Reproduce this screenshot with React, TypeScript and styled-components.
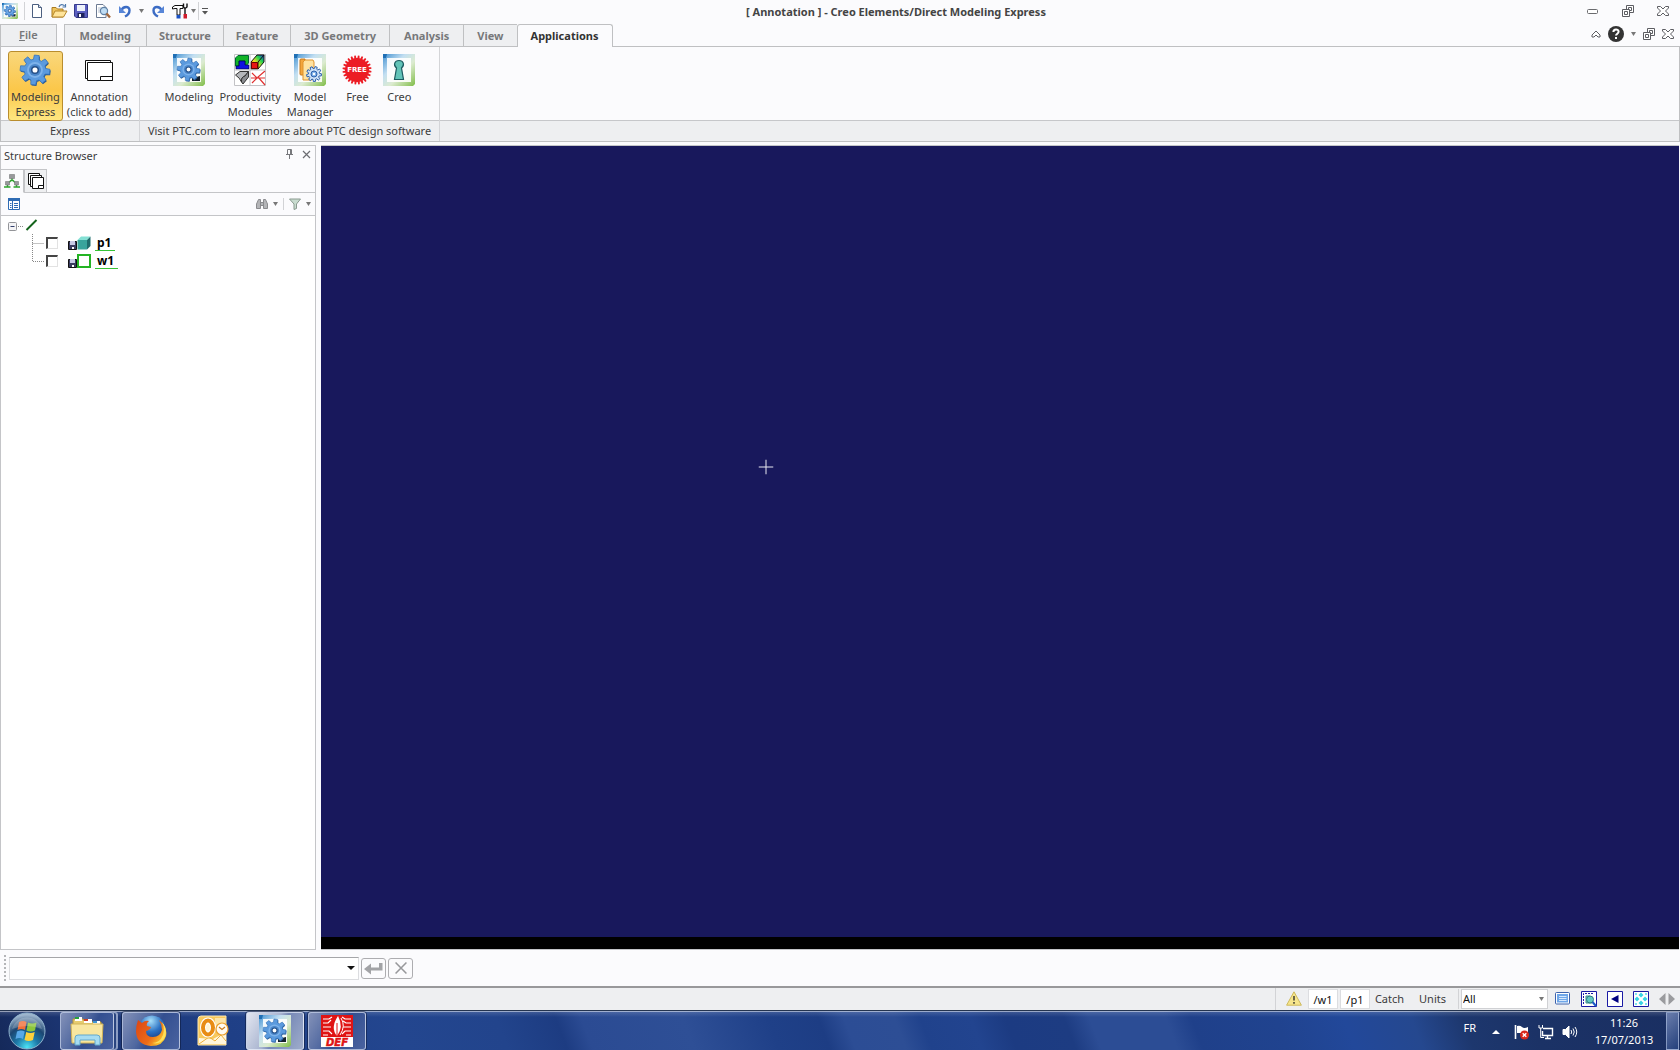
import React from "react";
import styled, { createGlobalStyle } from "styled-components";

const Global = createGlobalStyle`
  *, *::before, *::after { box-sizing: border-box; }
  html, body { margin: 0; padding: 0; }
  body { font-family: "Noto Sans", "Open Sans", sans-serif; font-size: 11px; line-height: 15px; color: #3c3c3c; background: #fbfbfd; }
  button, input, select { font: inherit; color: inherit; margin: 0; padding: 0; }
  button { background: none; border: 0; cursor: default; }
  svg { display: block; flex: none; }
  ul { list-style: none; margin: 0; padding: 0; }
`;

const Window = styled.div`
  display: flex;
  flex-direction: column;
  min-height: 100vh;
  overflow: hidden;
`;

/* ---------- title bar ---------- */
const TitleBar = styled.header`
  display: grid;
  grid-template-columns: 1fr auto 1fr;
  align-items: center;
  height: 24px;
  padding-bottom: 2px;
`;
const QuickAccess = styled.div`
  display: flex;
  align-items: center;
  height: 22px;
  padding-left: 2px;
`;
const QuickButton = styled.button<{ $w?: number }>`
  width: ${(p) => p.$w ?? 22}px;
  height: 22px;
  display: flex;
  align-items: center;
  justify-content: center;
`;
const Rule = styled.span<{ $h?: number; $gap?: number; $after?: number }>`
  width: 1px;
  height: ${(p) => p.$h ?? 18}px;
  margin: 0 ${(p) => p.$after ?? p.$gap ?? 0}px 0 ${(p) => p.$gap ?? 0}px;
  background: #d2d3d6;
`;
const Title = styled.h1`
  margin: 0;
  padding-left: 112px;
  font-size: 11px;
  font-weight: 700;
  color: #444;
`;
const Controls = styled.div<{ $gap: number; $pad: number }>`
  display: flex;
  align-items: center;
  justify-content: flex-end;
  gap: ${(p) => p.$gap}px;
  padding-right: ${(p) => p.$pad}px;
  margin-left: auto;
`;
const IconButton = styled.button`
  display: flex;
  align-items: center;
  justify-content: center;
`;

/* ---------- ribbon ---------- */
const TabRow = styled.nav`
  display: flex;
  height: 23px;
  box-shadow: inset 0 -1px 0 #bfc0c2;
`;
const TabControls = styled(Controls)`
  padding-bottom: 4px;
`;
const Tab = styled.button<{ $active?: boolean; $file?: boolean; $pad: number }>`
  height: 23px;
  padding: 0 ${(p) => p.$pad}px;
  padding-bottom: ${(p) => (p.$file ? 3 : p.$active ? 2 : 0)}px;
  margin-right: ${(p) => (p.$file ? 7 : 0)}px;
  font-weight: ${(p) => (p.$file ? 600 : 700)};
  color: ${(p) => (p.$active ? "#333" : "#77787a")};
  background: ${(p) => (p.$active ? "#fbfbfd" : "#eeeff1")};
  border: solid #bfc0c2;
  border-width: 1px ${(p) => (p.$active || p.$file ? 1 : 0)}px ${(p) => (p.$active ? 0 : 1)}px 1px;
  border-radius: ${(p) => (p.$active ? "3px 3px 0 0" : "0")};
`;
const Ribbon = styled.section`
  display: flex;
  height: 95px;
  border: solid #bfc0c2;
  border-width: 0 1px 1px 1px;
`;
const Group = styled.div<{ $grow?: boolean }>`
  display: flex;
  flex-direction: column;
  flex: ${(p) => (p.$grow ? "1" : "none")};
  border-right: ${(p) => (p.$grow ? "0" : "1px solid #d4d5d8")};
`;
const GroupItems = styled.div<{ $left: number; $right: number; $gap: number }>`
  display: flex;
  gap: ${(p) => p.$gap}px;
  height: 74px;
  padding: 4px ${(p) => p.$right}px 0 ${(p) => p.$left}px;
  border-bottom: 1px solid #c6c7ca;
`;
const GroupName = styled.div`
  flex: 1;
  padding: 2px 4px 0;
  text-align: center;
  white-space: nowrap;
  background: #eeeff1;
`;
const Tool = styled.button<{ $active?: boolean }>`
  display: flex;
  flex-direction: column;
  align-items: center;
  min-width: 42px;
  height: 70px;
  padding: 2px 2px 0;
  border: 1px solid ${(p) => (p.$active ? "#b98d2e" : "transparent")};
  border-radius: 3px;
  background: ${(p) => (p.$active ? "linear-gradient(#f9d77c, #fbc74a 55%, #fee680)" : "none")};
  white-space: pre-line;
`;
const ToolIcon = styled.span`
  display: flex;
  height: 34px;
  margin-bottom: 1px;
`;

/* ---------- workspace ---------- */
const Workspace = styled.div`
  flex: 1;
  display: flex;
  gap: 5px;
  padding-top: 3px;
`;
const Panel = styled.aside`
  display: flex;
  flex-direction: column;
  width: 316px;
  border: 1px solid #c4c5c8;
`;
const PanelHead = styled.div`
  display: flex;
  align-items: center;
  justify-content: space-between;
  height: 23px;
  padding: 0 4px 7px 3px;
`;
const PanelTitle = styled.h2`
  margin: 0;
  padding-top: 3px;
  font-size: 11px;
  font-weight: 400;
`;
const PanelTabs = styled.div`
  display: flex;
  height: 24px;
  box-shadow: inset 0 -1px 0 #c4c5c8;
`;
const PanelTab = styled.button<{ $active?: boolean }>`
  display: flex;
  align-items: center;
  justify-content: center;
  width: 23px;
  height: 24px;
  border: 1px solid #c4c5c8;
  border-left-width: ${(p) => (p.$active ? 0 : 1)}px;
  border-bottom-color: ${(p) => (p.$active ? "#fbfbfd" : "#c4c5c8")};
  background: ${(p) => (p.$active ? "#fbfbfd" : "#eeeff1")};
`;
const PanelTools = styled.div`
  display: flex;
  align-items: center;
  height: 23px;
  padding: 0 4px 0 7px;
  border-bottom: 1px solid #c4c5c8;
`;
const Tree = styled.ul`
  flex: 1;
  padding: 2px 7px;
  background: #fff;
`;
const TreeRoot = styled.div`
  display: flex;
  align-items: center;
  height: 16px;
`;
const Branch = styled.ul`
  padding-left: 24px;
`;
const Leaf = styled.li`
  display: flex;
  align-items: center;
  height: 18px;
`;
const LeafLabel = styled.label`
  display: flex;
  align-items: center;
  color: #000;
  font-size: 12px;
  font-weight: 700;
`;
const LeafName = styled.span`
  margin-left: 4px;
  padding: 0 4px 0 2px;
  height: 15px;
  line-height: 13px;
  border-bottom: 1px solid #35c435;
`;
const Check = styled.input`
  appearance: none;
  width: 12px;
  height: 12px;
  margin: 0 10px 0 2px;
  border: solid;
  border-width: 2px 1px 1px 2px;
  border-color: #444 #e2e2e2 #e2e2e2 #444;
  background: #fff;
`;
const Viewport = styled.main`
  position: relative;
  flex: 1;
  margin-right: 1px;
  border: solid #c4c5c8;
  border-width: 1px 0;
  background: linear-gradient(to top, #000 12px, #18185c 12px);
`;
const Cursor = styled.svg`
  position: absolute;
  left: 32.8%;
  top: 40%;
  transform: translate(-50%, -50%);
`;

/* ---------- command line and status ---------- */
const CommandLine = styled.form`
  display: flex;
  align-items: center;
  gap: 2px;
  height: 36px;
  padding-left: 4px;
`;
const Grip = styled.span`
  width: 2px;
  height: 26px;
  margin-right: 1px;
  background: repeating-linear-gradient(#b4b5b8 0 2px, transparent 2px 4px);
`;
const Combo = styled.div`
  display: flex;
  align-items: center;
  width: 350px;
  height: 23px;
  padding-right: 3px;
  background: #fff;
  border: 1px solid #dcdde0;
  border-top-color: #a5a6a9;
`;
const ComboInput = styled.input`
  flex: 1;
  min-width: 0;
  border: 0;
  outline: 0;
  background: transparent;
`;
const CommandButton = styled.button`
  display: flex;
  align-items: center;
  justify-content: center;
  width: 25px;
  height: 21px;
  border: 1px solid #adadb0;
  border-radius: 3px;
`;
const StatusBar = styled.footer`
  display: flex;
  align-items: center;
  justify-content: flex-end;
  height: 24px;
  padding: 0 5px 1px 0;
  border-top: 2px solid #98989a;
  background: #eeeff1;
`;
const Path = styled.button`
  width: 30px;
  height: 20px;
  margin-right: 2px;
  padding-top: 1px;
  border: 1px solid #dcdde0;
  background: #fff;
  color: #111;
`;
const StatusText = styled.button`
  margin: 0 12px 0 3px;
`;
const FilterBox = styled.span`
  display: flex;
  align-items: center;
  width: 87px;
  height: 20px;
  margin: 0 7px 0 2px;
  padding-right: 3px;
  border: 1px solid #d0d1d4;
  background: #fff;
`;
const Filter = styled.select`
  flex: 1;
  appearance: none;
  padding-left: 1px;
  border: 0;
  outline: 0;
  background: transparent;
  color: #111;
`;
const StatusIcons = styled.div`
  display: flex;
  align-items: center;
  gap: 10px;
`;

/* ---------- taskbar ---------- */
const Taskbar = styled.nav`
  display: flex;
  align-items: center;
  height: 40px;
  border-top: 1px solid #24344f;
  color: #fff;
  background:
    linear-gradient(rgba(255, 255, 255, 0.55) 0 1px, rgba(255, 255, 255, 0.14) 1px, transparent 6px),
    linear-gradient(69deg, #15295a 0%, #1b3470 4%, #1f3f86 14%, #23468f 24%, #22448c 30%, #1d3c82 33.5%, #2b4b93 35%,
      #2e4f96 41%, #1f4088 46%, #1d3d84 49%, #2c4d95 50.5%, #2d4e95 53.5%, #20428c 55%, #22448f 58%, #1c3b82 60%,
      #1d3c82 63.5%, #2c4d95 65%, #2c4d95 69.5%, #1f408a 71%, #20438f 76%, #22489a 80%, #25488f 84%, #1d376e 87%, #1b3266 91%, #1a2f62 100%);
`;
const StartButton = styled.button`
  margin: 0 14px 0 8px;
`;
const TaskButton = styled.button<{ $state?: "open" | "active"; $stack?: boolean }>`
  display: flex;
  align-items: center;
  justify-content: center;
  width: ${(p) => (p.$stack ? 54 : 58)}px;
  height: 38px;
  margin-right: ${(p) => (p.$stack ? 8 : 4)}px;
  border: 1px solid ${(p) => (p.$state ? "rgba(225,232,248,.65)" : "transparent")};
  border-radius: 3px;
  box-shadow: ${(p) => (p.$stack ? "3px 0 0 -1px #2a4580, 4px 0 0 0 rgba(215,225,245,.6)" : p.$state ? "0 0 0 1px rgba(10,20,50,.5)" : "none")};
  background: ${(p) =>
    p.$state === "active"
      ? "linear-gradient(120deg, #e2e6f0, #a9b4d0 45%, #7789b6 55%, #9fadcc)"
      : p.$state === "open"
        ? "linear-gradient(120deg, #8391b8, #5068a0 40%, #334f90 55%, #4a63a0)"
        : "none"};
`;
const Tray = styled.div`
  display: flex;
  align-items: center;
  height: 100%;
  margin-left: auto;
`;
const Language = styled.button`
  margin: 0 16px 6px 0;
`;
const HiddenIcons = styled(IconButton)`
  margin-right: 6px;
`;
const TrayIcons = styled.div`
  display: flex;
  align-items: center;
  gap: 8px;
  padding-top: 2px;
`;
const Clock = styled.time`
  width: 88px;
  padding-left: 4px;
  text-align: center;
  line-height: 17px;
  white-space: pre-line;
`;
const ShowDesktop = styled.button`
  width: 13px;
  height: 38px;
  margin-right: 1px;
  border: 1px solid rgba(190, 205, 235, 0.6);
  background: linear-gradient(135deg, #6a7dac, #24407c);
`;

/* ---------- drawings ---------- */
const gearPath = (cx: number, cy: number, outer: number, inner: number, teeth = 8) => {
  const pts: string[] = [];
  for (let i = 0; i < teeth; i++) {
    const a = (i / teeth) * Math.PI * 2 + 0.12;
    const w = Math.PI / teeth;
    [[-0.68, inner], [-0.42, outer], [0.42, outer], [0.68, inner]].forEach(([k, r]) =>
      pts.push(`${(cx + Math.cos(a + k * w) * r).toFixed(2)} ${(cy + Math.sin(a + k * w) * r).toFixed(2)}`)
    );
  }
  return `M${pts.join("L")}Z`;
};

const Gear = ({ cx = 16, cy = 16, r = 15 }: { cx?: number; cy?: number; r?: number }) => (
  <g>
    <path d={gearPath(cx + r * 0.05, cy + r * 0.07, r, r * 0.72)} fill="#2a5a94" />
    <path d={gearPath(cx, cy, r, r * 0.72)} fill="#5b9ade" stroke="#3672b4" strokeWidth={r * 0.05} />
    <circle cx={cx} cy={cy} r={r * 0.53} fill="#7db2ea" />
    <circle cx={cx} cy={cy} r={r * 0.4} fill="#4a86ca" />
    <circle cx={cx} cy={cy} r={r * 0.22} fill="#fff" stroke="#244f88" strokeWidth={r * 0.1} />
  </g>
);

const Frame = ({ id }: { id: string }) => (
  <g>
    <defs>
      <linearGradient id={id} x1="0" y1="0" x2="1" y2="1">
        <stop offset="0" stopColor="#3f8fd0" />
        <stop offset=".35" stopColor="#c3dff2" />
        <stop offset=".6" stopColor="#dcebd0" />
        <stop offset="1" stopColor="#80bd48" />
      </linearGradient>
    </defs>
    <path d="M0 0H32V30L30 32H0Z" fill={`url(#${id})`} />
    <path d="M4 4H28V28H4Z" fill="#fff" opacity=".9" />
    <path d="M0 0H4L3 4H0Z" fill="#1f6fb5" />
  </g>
);

const GearTile = ({ size, id }: { size: number; id: string }) => (
  <svg width={size} height={size} viewBox="0 0 32 32">
    <Frame id={id} />
    <path d="M19 24l8-2v5h-8z" fill="#14202c" />
    <Gear cx={15.5} cy={15.5} r={11.5} />
  </svg>
);

const Down = ({ w = 6, fill = "#777" }: { w?: number; fill?: string }) => (
  <svg width={w} height="4" viewBox="0 0 6 4" preserveAspectRatio="none"><path d="M0 0H6L3 4Z" fill={fill} /></svg>
);

const NewIcon = () => (
  <svg width="16" height="16" viewBox="0 0 16 16">
    <path d="M3.500 1.500H9.500L12.500 4.500V14.500H3.500Z" fill="#fff" stroke="#4c5f80" />
    <path d="M9.500 1.500V4.500H12.500" fill="#d5deec" stroke="#4c5f80" />
  </svg>
);
const OpenIcon = () => (
  <svg width="17" height="16" viewBox="0 0 17 16">
    <path d="M1 14V4.500H5L6.500 6H12V14Z" fill="#efc45c" stroke="#a97b20" />
    <path d="M1 14L4 8H16L12.500 14Z" fill="#ffe49a" stroke="#b5862a" />
    <path d="M8 4C9 1 12 1 13.500 3M14.500 1V4H11.500" fill="none" stroke="#4f79ad" strokeWidth="1.200" />
  </svg>
);
const SaveIcon = () => (
  <svg width="16" height="16" viewBox="0 0 16 16">
    <path d="M1.500 1.500H14.500V14.500H3L1.500 13Z" fill="#5b5fc0" stroke="#353a8c" />
    <path d="M4 2H12V8H4Z" fill="#edf1fa" />
    <path d="M4.500 10H11.500V14.500H4.500Z" fill="#20245c" />
    <path d="M6 11H8V14H6Z" fill="#fff" />
  </svg>
);
const PreviewIcon = () => (
  <svg width="16" height="16" viewBox="0 0 16 16">
    <path d="M1.500 1.500H8L11 4.500V14.500H1.500Z" fill="#fff" stroke="#6c7a92" />
    <path d="M3 5H7M3 7H6M3 9H5" stroke="#b6c0d0" />
    <circle cx="9" cy="8" r="3.600" fill="#bfdcf3" stroke="#5f7fa3" strokeWidth="1.200" />
    <path d="M11.500 10.500L15 14.500" stroke="#a3683c" strokeWidth="2.400" />
  </svg>
);
const UndoIcon = ({ flip }: { flip?: boolean }) => (
  <svg width="14" height="14" viewBox="0 0 14 14">
    <g transform={flip ? "matrix(-1 0 0 1 14 0)" : undefined}>
      <path d="M3.500 6C5 2.500 11.500 1.500 11.500 6.200C11.500 9 10 11 7 12.500" fill="none" stroke="#3c6cc4" strokeWidth="2.400" />
      <path d="M1 2V9H8Z" fill="#5886d8" />
    </g>
  </svg>
);
const ToolsIcon = () => (
  <svg width="16" height="16" viewBox="0 0 16 16">
    <path d="M.5 6V4L3 2.500H11V5.500H8V12H5V5.500H3Z" fill="#fff" stroke="#111" />
    <path d="M4.500 12H8.500V15.500H4.500Z" fill="#1a52c4" />
    <path d="M11.500 .5V4L13 5.500V11M15 .5V4L13 5.500" fill="none" stroke="#111" strokeWidth="1.400" />
    <path d="M11.500 11H15V15.500H11.500Z" fill="#d01c2c" />
  </svg>
);
const MinIcon = () => (
  <svg width="12" height="12" viewBox="0 0 12 12"><rect x=".5" y="4.500" width="10" height="4" rx="1" fill="#fff" stroke="#6a6b6e" /></svg>
);
const RestoreIcon = () => (
  <svg width="12" height="12" viewBox="0 0 12 12" fill="#fff" stroke="#5c5d62">
    <path d="M4.500 .5H11.500V7.500H4.500Z" /><path d="M6.500 2.500H9.500V5.500H6.500Z" />
    <path d="M.5 4.500H7.500V11.500H.5Z" /><path d="M2.500 6.500H5.500V9.500H2.500Z" />
  </svg>
);
const CloseIcon = () => (
  <svg width="12" height="10" viewBox="0 0 12 10">
    <path d="M.5 .5H3.500L6 3L8.500 .5H11.500V2L8.500 5L11.500 8V9.500H8.500L6 7L3.500 9.500H.5V8L3.500 5L.5 2Z" fill="#fff" stroke="#5c5d62" />
  </svg>
);
const CollapseIcon = () => (
  <svg width="10" height="8" viewBox="0 0 10 8"><path d="M5 1L9 5V7H7L5 5L3 7H1V5Z" fill="#fff" stroke="#5c5d62" /></svg>
);
const HelpIcon = () => (
  <svg width="16" height="16" viewBox="0 0 16 16">
    <circle cx="8" cy="8" r="8" fill="#333" />
    <path d="M5.400 6C5.400 2.600 10.600 2.600 10.600 5.800C10.600 7.600 8 7.800 8 9.600" fill="none" stroke="#fff" strokeWidth="2" />
    <path d="M7 11H9V13H7Z" fill="#fff" />
  </svg>
);

const AnnotationIcon = () => (
  <svg width="32" height="32" viewBox="0 0 32 32" fill="#fff" stroke="#111">
    <path d="M2.500 6.500H27.500V24.500H2.500Z" /><path d="M4.500 8.500H29.500V26.500H4.500Z" /><path d="M17.500 22.500H29.500V26.500H17.500Z" />
  </svg>
);
const ProductivityIcon = () => (
  <svg width="32" height="32" viewBox="0 0 32 32">
    <defs>
      <linearGradient id="heat" x1="1" y1="0" x2="0" y2="1">
        <stop offset="0" stopColor="#2433e0" /><stop offset=".3" stopColor="#20d050" /><stop offset=".6" stopColor="#f0e020" /><stop offset="1" stopColor="#e01010" />
      </linearGradient>
    </defs>
    <path d="M.5 .5H31.500V31.500H.5Z" fill="#fff" stroke="#c2c2c6" />
    <path d="M1.500 4L4 1.500H14.500V9L11 13V7H5V12H1.500Z" fill="#12b428" stroke="#063" />
    <path d="M5 7H11V11H15V15H2V12H5Z" fill="#1010e0" stroke="#004" strokeWidth=".7" />
    <path d="M17 8L23 1H30V8L24 15H17Z" fill="url(#heat)" stroke="#111" />
    <path d="M24 8V15M24 8L30 1" fill="none" stroke="#111" />
    <path d="M17.500 8.500H23.500V14.500H17.500Z" fill="#e81414" stroke="#600" />
    <path d="M1.500 21L6 17.500H14.500L11 22Q7 23 7.500 28Q6 24 1.500 21Z" fill="#b4b6ba" stroke="#333" />
    <path d="M11 22L14.500 17.500V23L9 30L7.500 28Q7 23 11 22Z" fill="#8a8c90" stroke="#333" />
    <path d="M31 17L24 23L31 31M17 24H31M18 19L23 24M18 29L23 24" fill="none" stroke="#e03030" strokeWidth="1.200" />
    <path d="M16 1V31M1 16H31" stroke="#c2c2c6" />
  </svg>
);
const ManagerIcon = () => (
  <svg width="32" height="32" viewBox="0 0 32 32">
    <Frame id="fm" />
    <path d="M6 6Q6 5 7 5H11V21H7Q6 21 6 20Z" fill="#f4a63c" stroke="#c5781c" />
    <path d="M9 8L11 6H19L20 8V24L18 26H9Z" fill="#ffe2a0" stroke="#e0932c" />
    <path d={gearPath(20, 20, 7.5, 5.5, 9)} fill="#cfe2f8" stroke="#2c60ac" />
    <circle cx="20" cy="20" r="3" fill="#7fb2ea" stroke="#2c60ac" /><circle cx="20" cy="20" r="1.200" fill="#fff" />
  </svg>
);
const FreeIcon = () => (
  <svg width="30" height="32" viewBox="0 0 30 32">
    <path d={gearPath(15, 16, 14.5, 12, 24)} fill="#ec1c24" />
    <text x="15" y="18" textAnchor="middle" fontSize="7" fontWeight="700" fill="#fff" fontFamily="DejaVu Sans, sans-serif">FREE</text>
  </svg>
);
const CreoIcon = () => (
  <svg width="32" height="32" viewBox="0 0 32 32">
    <Frame id="fc" />
    <path d="M13.500 14C10 11 11.500 6.500 16 6.500S22 11 18.500 14L20.500 25.500H11.500Z" fill="#62c4b8" stroke="#1c5c60" strokeWidth="1.200" />
  </svg>
);

const PinIcon = () => (
  <svg width="9" height="10" viewBox="0 0 9 10"><path d="M2.500 5.500V.5H6.500V5.500M1 5.500H8M4.500 6V10M5.500 1V5" fill="none" stroke="#77787c" /></svg>
);
const ThinX = ({ size = 9, color = "#6c6d72", sw = 1.2 }: { size?: number; color?: string; sw?: number }) => (
  <svg width={size} height={size} viewBox="0 0 9 9"><path d="M1 1L8 8M8 1L1 8" stroke={color} strokeWidth={sw} /></svg>
);
const HierarchyIcon = () => (
  <svg width="16" height="16" viewBox="0 0 16 16">
    <path d="M8 5V8M3.500 11L7 7.500H9L12.500 11M0 14H6.500M9.500 14H16M3.500 12V14M12.500 12V14" fill="none" stroke="#2ca42c" strokeWidth="1.400" />
    <path d="M5.500 1.500H10.500V5.500H5.500Z M1.500 8.500H5.500V12H1.500Z M10.500 8.500H14.500V12H10.500Z" fill="#98999c" stroke="#77787a" strokeWidth=".6" />
  </svg>
);
const SheetsIcon = () => (
  <svg width="16" height="16" viewBox="0 0 16 16" fill="#fff" stroke="#111">
    <path d="M.5 .5H11.500V11.500H.5Z" /><path d="M2.500 2.500H13.500V13.500H2.500Z" /><path d="M4.500 4.500H15.500V15.500H4.500Z" /><path d="M10.500 15.500V12.500H15.500" />
  </svg>
);
const ColumnsIcon = () => (
  <svg width="12" height="12" viewBox="0 0 12 12">
    <path d="M.5 .5H11.500V11.500H.5Z" fill="#fff" stroke="#2f6cb4" /><path d="M0 0H12V3H0Z" fill="#2f6cb4" />
    <path d="M4.500 3V11M2 5.500H3.500M2 7.500H3.500M2 9.500H3.500M6 5.500H10M6 7.500H10M6 9.500H10" stroke="#2f6cb4" />
  </svg>
);
const BinocularsIcon = () => (
  <svg width="12" height="10" viewBox="0 0 12 10" fill="#b4b5b8" stroke="#8a8b8e">
    <path d="M2.500 .5H4.500V9.500H.5V5Z M9.500 .5H7.500V9.500H11.500V5Z M4.500 3.500H7.500V6.500H4.500Z" />
  </svg>
);
const FunnelIcon = () => (
  <svg width="12" height="12" viewBox="0 0 12 12"><path d="M.5 1H11.500L7.500 6V10.500L5 11.500V6Z" fill="#c8dccf" stroke="#8a9a90" /></svg>
);
const Expander = () => (
  <svg width="30" height="16" viewBox="0 0 30 16">
    <rect x=".5" y="4.500" width="8" height="8" rx="1" fill="#f4f4f6" stroke="#939498" /><path d="M2.500 8.500H6.500" stroke="#33406c" />
    <path d="M10 8.500H16" stroke="#888" strokeDasharray="1 1" />
    <path d="M18.500 12L28.500 2" stroke="#14641c" strokeWidth="2" />
  </svg>
);
const Elbow = ({ last }: { last?: boolean }) => (
  <svg width="12" height="18" viewBox="0 0 12 18"><path d={last ? "M.5 0V9.500H12" : "M.5 0V18M.5 9.500H12"} fill="none" stroke="#888" strokeDasharray="1 1" /></svg>
);
const DiskIcon = () => (
  <svg width="9" height="14" viewBox="0 0 9 14"><path d="M.5 5.500H8.500V13.500H.5Z" fill="#3a3c60" stroke="#111" /><path d="M2 5H7V9H2Z" fill="#c8cae6" /><path d="M4 11H6V13H4Z" fill="#fff" /></svg>
);
const PartIcon = () => (
  <svg width="14" height="14" viewBox="0 0 14 14">
    <path d="M.5 4L4 .5H13.500L10 4Z" fill="#84e0d4" /><path d="M.5 4H10V13.500H.5Z" fill="#38a49c" /><path d="M10 4L13.500 .5V10L10 13.500Z" fill="#1e6c6c" />
  </svg>
);
const PlaneIcon = () => (
  <svg width="14" height="14" viewBox="0 0 14 14"><path d="M1 1H13V13H1Z" fill="#fff" stroke="#24b424" strokeWidth="2" /></svg>
);

const WarningIcon = () => (
  <svg width="16" height="15" viewBox="0 0 16 15"><path d="M8 .8L15.400 14.200H.6Z" fill="#f6e58c" stroke="#cdb95c" strokeLinejoin="round" /><path d="M8 5V9.500M8 11V12.800" stroke="#5c5840" strokeWidth="1.800" /></svg>
);
const ListIcon = () => (
  <svg width="16" height="13" viewBox="0 0 16 13"><rect x=".5" y=".5" width="14" height="11.500" rx="1" fill="#fff" stroke="#3c62ac" /><path d="M2 2H13V10.500H2Z" fill="#6ea6e8" /><path d="M4 4.500H11.500M4 6.500H11.500M4 8.500H11.500" stroke="#d6e8fc" /></svg>
);
const Boxed = ({ children }: { children: React.ReactNode }) => (
  <svg width="16" height="16" viewBox="0 0 16 16"><path d="M.5 .5H15.500V15.500H.5Z" fill="#fff" stroke="#1a1aa4" />{children}</svg>
);
const EnterIcon = () => (
  <svg width="19" height="13" viewBox="0 0 19 13"><path d="M0 7L7 1.500V5.500H15V1H18.500V8.500H7V12.500Z" fill="#a2a3a6" /></svg>
);

const StartOrb = () => (
  <svg width="38" height="38" viewBox="0 0 38 38">
    <defs>
      <radialGradient id="orb" cx=".5" cy=".95" r=".9">
        <stop offset="0" stopColor="#4ce4f6" /><stop offset=".35" stopColor="#1d78a8" /><stop offset=".65" stopColor="#1c4672" /><stop offset="1" stopColor="#9fb6ce" />
      </radialGradient>
    </defs>
    <circle cx="19" cy="19" r="18" fill="url(#orb)" stroke="#8fb2cc" />
    <path d="M11 10Q15 8 18.500 10L17 18Q13.500 16 9.500 18Z" fill="#f0703a" />
    <path d="M20 10.500Q24 12.500 28.500 10.500L27 18.500Q22.500 20.500 18.500 18.500Z" fill="#8cc63c" />
    <path d="M9 19.500Q13 17.500 16.700 19.500L15 27Q11.500 25 7.500 27Z" fill="#58a8e8" />
    <path d="M18.200 20Q22.500 22 26.700 20L25 28Q20.500 30 16.500 28Z" fill="#fcd03c" />
    <path d="M4 17A15.500 15.500 0 0 1 34 17Q19 11 4 17Z" fill="#fff" opacity=".2" />
  </svg>
);
const FolderIcon = () => (
  <svg width="34" height="32" viewBox="0 0 34 32">
    <path d="M3 4H13L15 7H31V27H3Z" fill="#e6cb70" stroke="#b89838" />
    <path d="M5 2H12V6H5Z" fill="#fff" /><path d="M5 2H9V4H5Z" fill="#28a43c" />
    <path d="M14 4H22V8H14Z" fill="#fff" /><path d="M14 4H18V6H14Z" fill="#cc3c24" /><path d="M23 6H30V9H23Z" fill="#fff" /><path d="M23 6H27V8H23Z" fill="#3c94d4" />
    <path d="M1 9H33L32 28H2Z" fill="#f8e6a0" stroke="#d2b458" />
    <path d="M5 30V23Q5 20 8 20H27Q30 20 30 23V30H25V25H10V30Z" fill="#a6dcf2" stroke="#62a8cc" />
  </svg>
);
const FirefoxIcon = () => (
  <svg width="32" height="32" viewBox="0 0 32 32">
    <defs>
      <radialGradient id="globe" cx=".45" cy=".2" r=".8"><stop offset="0" stopColor="#a8e0fa" /><stop offset=".5" stopColor="#2c72c4" /><stop offset="1" stopColor="#122c70" /></radialGradient>
      <linearGradient id="fox" x1="0" y1="0" x2="1" y2=".6"><stop offset="0" stopColor="#dc4414" /><stop offset=".65" stopColor="#ec6c18" /><stop offset="1" stopColor="#fcc82c" /></linearGradient>
    </defs>
    <circle cx="17" cy="14" r="13.500" fill="url(#globe)" />
    <path d="M3 5L7 8Q10 5 14 6Q11 8 12 11L16 12Q15 15 11 16Q11 22 18 22Q25 22 27 15Q27 10 24 5Q33 12 31 21Q28 31 16 31Q2 30 1 17Q1 10 3 5Z" fill="url(#fox)" />
    <path d="M27 7Q30 13 28 20Q25 28 17 28Q26 30 30 22Q33 14 27 7Z" fill="#fce05c" />
  </svg>
);
const OutlookIcon = () => (
  <svg width="32" height="32" viewBox="0 0 32 32">
    <path d="M4 1H29V30H1V4Q1 1 4 1Z" fill="#f8c85c" stroke="#fce9b4" />
    <path d="M2 23L16 24L29 17V29H2Z" fill="#fff6dc" /><path d="M2 29L12 22L18 26L24 20L29 26" fill="none" stroke="#eeb03c" />
    <path d="M18 3H28V12H18Z" fill="#fce4a8" />
    <ellipse cx="11" cy="12.500" rx="5" ry="7" fill="#fff4d4" stroke="#fff" strokeWidth="6" />
    <ellipse cx="11" cy="12.500" rx="5" ry="7" fill="none" stroke="#e88c14" strokeWidth="4" />
    <circle cx="25" cy="14" r="6" fill="#fffaf0" stroke="#eaa030" strokeWidth="1.200" /><path d="M22 12L25 14.500L28 12" fill="none" stroke="#c87a1c" strokeWidth="1.200" />
  </svg>
);
const DefIcon = () => (
  <svg width="32" height="32" viewBox="0 0 32 32">
    <path d="M0 0H32V32H0Z" fill="#fff" /><path d="M0 0H32V22H0Z" fill="#e01414" />
    <path d="M2 4H8L11 2M2 8H7L10 5M2 12H10M2 16H8L11 19M2 20H7M21 2L24 4H30M22 6L25 8H30M22 12H30M21 19L24 16H30M25 20H30" fill="none" stroke="#fff" strokeWidth="1.200" />
    <path d="M16 21Q9 13 17 1Q23 12 16 21Z" fill="#fff" /><path d="M16 21V8" stroke="#e01414" /><path d="M20 3Q25 11 19 20" fill="none" stroke="#fff" />
    <text x="16" y="31" textAnchor="middle" fontSize="10" fontWeight="700" fontStyle="italic" fill="#e01414" stroke="#e01414" strokeWidth=".5" fontFamily="DejaVu Sans, sans-serif">DEF</text>
  </svg>
);
const FlagIcon = () => (
  <svg width="16" height="16" viewBox="0 0 16 16">
    <path d="M1.500 1V15" stroke="#fff" strokeWidth="1.600" /><path d="M3 2Q6 1 8 3T14 3V9H3Z" fill="#fff" />
    <circle cx="10.500" cy="11" r="4.500" fill="#d8281c" /><path d="M8.700 9.200L12.300 12.800M12.300 9.200L8.700 12.800" stroke="#fff" strokeWidth="1.400" />
  </svg>
);
const NetworkIcon = () => (
  <svg width="16" height="16" viewBox="0 0 16 16" fill="none" stroke="#fff"><path d="M5 4.500H14.500V11.500H4.500V7M7 14.500H13M9.500 12V14" strokeWidth="1.400" /><path d="M1 1V4H4.500V1M2.700 4V13.500H6" /></svg>
);
const SpeakerIcon = () => (
  <svg width="16" height="16" viewBox="0 0 16 16" fill="none" stroke="#fff"><path d="M1 5.500H3.500L7 2V14L3.500 10.500H1Z" fill="#fff" /><path d="M9 6Q10.500 8 9 10M11 4.500Q13.500 8 11 11.500M13 3Q16.500 8 13 13" /></svg>
);

/* ---------- screen ---------- */
const tabs: [string, number][] = [
  ["Modeling", 15], ["Structure", 12], ["Feature", 12], ["3D Geometry", 13], ["Analysis", 14], ["View", 13], ["Applications", 13],
];
const learnTools: [string, React.ReactNode][] = [
  ["Modeling", <GearTile key="m" size={32} id="fr" />],
  ["Productivity\nModules", <ProductivityIcon key="p" />],
  ["Model\nManager", <ManagerIcon key="g" />],
  ["Free", <FreeIcon key="f" />],
  ["Creo", <CreoIcon key="c" />],
];

export default function App() {
  return (
    <Window>
      <Global />
      <TitleBar>
        <QuickAccess>
          <GearTile size={16} id="fa" />
          <Rule $gap={6} $after={1} />
          <QuickButton aria-label="New"><NewIcon /></QuickButton>
          <QuickButton aria-label="Open"><OpenIcon /></QuickButton>
          <QuickButton aria-label="Save"><SaveIcon /></QuickButton>
          <QuickButton aria-label="Preview"><PreviewIcon /></QuickButton>
          <QuickButton aria-label="Undo"><UndoIcon /></QuickButton>
          <QuickButton $w={11} aria-label="Undo list"><Down w={5} /></QuickButton>
          <QuickButton aria-label="Redo"><UndoIcon flip /></QuickButton>
          <QuickButton aria-label="Tools"><ToolsIcon /></QuickButton>
          <QuickButton $w={5} aria-label="Tools list"><Down w={5} /></QuickButton>
          <Rule $gap={2} />
          <QuickButton $w={8} aria-label="Customize">
            <svg width="6" height="7" viewBox="0 0 6 7"><path d="M0 .5H6" stroke="#555" /><path d="M0 3H6L3 6.500Z" fill="#555" /></svg>
          </QuickButton>
        </QuickAccess>
        <Title>[ Annotation ] - Creo Elements/Direct Modeling Express</Title>
        <Controls $gap={23} $pad={11}>
          <IconButton aria-label="Minimize"><MinIcon /></IconButton>
          <IconButton aria-label="Restore"><RestoreIcon /></IconButton>
          <IconButton aria-label="Close"><CloseIcon /></IconButton>
        </Controls>
      </TitleBar>

      <TabRow>
        <Tab $file $pad={18}><u>F</u>ile</Tab>
        {tabs.map(([name, pad]) => (
          <Tab key={name} $pad={pad} $active={name === "Applications"}>{name}</Tab>
        ))}
        <TabControls $gap={7} $pad={6}>
          <IconButton aria-label="Collapse ribbon"><CollapseIcon /></IconButton>
          <IconButton aria-label="Help"><HelpIcon /></IconButton>
          <IconButton aria-label="Help list"><Down w={5} /></IconButton>
          <IconButton aria-label="Restore document"><RestoreIcon /></IconButton>
          <IconButton aria-label="Close document"><CloseIcon /></IconButton>
        </TabControls>
      </TabRow>

      <Ribbon>
        <Group>
          <GroupItems $left={7} $right={4} $gap={1}>
            <Tool $active>
              <ToolIcon><svg width="32" height="32" viewBox="0 0 32 32"><Gear /></svg></ToolIcon>
              {"Modeling\nExpress"}
            </Tool>
            <Tool><ToolIcon><AnnotationIcon /></ToolIcon>{"Annotation\n(click to add)"}</Tool>
          </GroupItems>
          <GroupName>Express</GroupName>
        </Group>
        <Group>
          <GroupItems $left={22} $right={19} $gap={0}>
            {learnTools.map(([name, icon]) => (
              <Tool key={name}><ToolIcon>{icon}</ToolIcon>{name}</Tool>
            ))}
          </GroupItems>
          <GroupName>Visit PTC.com to learn more about PTC design software</GroupName>
        </Group>
        <Group $grow>
          <GroupItems $left={0} $right={0} $gap={0} />
          <GroupName />
        </Group>
      </Ribbon>

      <Workspace>
        <Panel>
          <PanelHead>
            <PanelTitle>Structure Browser</PanelTitle>
            <Controls $gap={8} $pad={0}>
              <IconButton aria-label="Pin"><PinIcon /></IconButton>
              <IconButton aria-label="Close panel"><ThinX /></IconButton>
            </Controls>
          </PanelHead>
          <PanelTabs>
            <PanelTab $active aria-label="Structure"><HierarchyIcon /></PanelTab>
            <PanelTab aria-label="Sheets"><SheetsIcon /></PanelTab>
          </PanelTabs>
          <PanelTools>
            <IconButton aria-label="Columns"><ColumnsIcon /></IconButton>
            <Controls $gap={5} $pad={0}>
              <IconButton aria-label="Find"><BinocularsIcon /></IconButton>
              <IconButton aria-label="Find list"><Down w={5} /></IconButton>
              <Rule $h={12} />
              <IconButton aria-label="Filter"><FunnelIcon /></IconButton>
              <IconButton aria-label="Filter list"><Down w={5} /></IconButton>
            </Controls>
          </PanelTools>
          <Tree>
            <li>
              <TreeRoot><Expander /></TreeRoot>
              <Branch>
                {["p1", "w1"].map((name) => (
                  <Leaf key={name}>
                    <Elbow last={name === "w1"} />
                    <Check type="checkbox" id={name} />
                    <LeafLabel htmlFor={name}>
                      <DiskIcon />
                      {name === "p1" ? <PartIcon /> : <PlaneIcon />}
                      <LeafName>{name}</LeafName>
                    </LeafLabel>
                  </Leaf>
                ))}
              </Branch>
            </li>
          </Tree>
        </Panel>
        <Viewport>
          <Cursor width="15" height="15" viewBox="0 0 15 15"><path d="M7.500 0V15M0 7.500H15" stroke="#e8e8f0" /></Cursor>
        </Viewport>
      </Workspace>

      <CommandLine onSubmit={(e) => e.preventDefault()}>
        <Grip />
        <Combo>
          <ComboInput aria-label="Command" />
          <IconButton type="button" aria-label="Command history"><Down w={8} fill="#111" /></IconButton>
        </Combo>
        <CommandButton aria-label="Enter"><EnterIcon /></CommandButton>
        <CommandButton type="button" aria-label="Cancel"><ThinX size={14} color="#97989b" sw={1} /></CommandButton>
      </CommandLine>

      <StatusBar>
        <Rule $h={22} $gap={10} />
        <IconButton aria-label="Warnings"><WarningIcon /></IconButton>
        <Rule $h={0} $gap={2} $after={3} />
        <Path>/w1</Path>
        <Path>/p1</Path>
        <StatusText>Catch</StatusText>
        <StatusText>Units</StatusText>
        <Rule $h={20} />
        <FilterBox>
          <Filter aria-label="Filter" defaultValue="All"><option>All</option></Filter>
          <Down w={5} />
        </FilterBox>
        <StatusIcons>
          <IconButton aria-label="Views"><ListIcon /></IconButton>
          <IconButton aria-label="Zoom to box">
            <Boxed>
              <path d="M2.500 13V2.500H13" fill="none" stroke="#1a1aa4" strokeDasharray="2 1" />
              <path d="M5 5H9L11 7V12H5Z" fill="#9fd6d0" stroke="#3a8c88" />
              <circle cx="9" cy="8.500" r="3.500" fill="#62c8c0" stroke="#2a7c88" /><path d="M11.500 11L15 15" stroke="#1a5cc4" strokeWidth="2" />
            </Boxed>
          </IconButton>
          <IconButton aria-label="Previous view"><Boxed><path d="M11.500 4V12L4 8Z" fill="#000080" /></Boxed></IconButton>
          <IconButton aria-label="Fit view">
            <Boxed>
              <path d="M8 1.500L10.500 4L8 6.500L5.500 4ZM8 9.500L10.500 12L8 14.500L5.500 12ZM4 5.500L6.500 8L4 10.500L1.500 8ZM12 5.500L14.500 8L12 10.500L9.500 8Z" fill="#38d4e4" />
              <path d="M2 2H4V4H2ZM12 2H14V4H12ZM2 12H4V14H2ZM12 12H14V14H12Z" fill="#7ee4ee" />
            </Boxed>
          </IconButton>
          <IconButton aria-label="Scroll">
            <svg width="16" height="12" viewBox="0 0 16 12"><path d="M6.500 0V12L0 6ZM9.500 0V12L16 6Z" fill="#9a9b9e" /></svg>
          </IconButton>
        </StatusIcons>
      </StatusBar>

      <Taskbar>
        <StartButton aria-label="Start"><StartOrb /></StartButton>
        <TaskButton $state="open" $stack aria-label="Explorer"><FolderIcon /></TaskButton>
        <TaskButton $state="open" aria-label="Firefox"><FirefoxIcon /></TaskButton>
        <TaskButton aria-label="Outlook"><OutlookIcon /></TaskButton>
        <TaskButton $state="active" aria-label="Modeling Express"><GearTile size={32} id="ft" /></TaskButton>
        <TaskButton $state="open" aria-label="DEF"><DefIcon /></TaskButton>
        <Tray>
          <Language>FR</Language>
          <TrayIcons>
            <HiddenIcons aria-label="Hidden icons"><svg width="8" height="4" viewBox="0 0 8 4"><path d="M0 4L4 0L8 4Z" fill="#fff" /></svg></HiddenIcons>
            <FlagIcon />
            <NetworkIcon />
            <SpeakerIcon />
          </TrayIcons>
          <Clock>{"11:26\n17/07/2013"}</Clock>
          <ShowDesktop aria-label="Show desktop" />
        </Tray>
      </Taskbar>
    </Window>
  );
}
